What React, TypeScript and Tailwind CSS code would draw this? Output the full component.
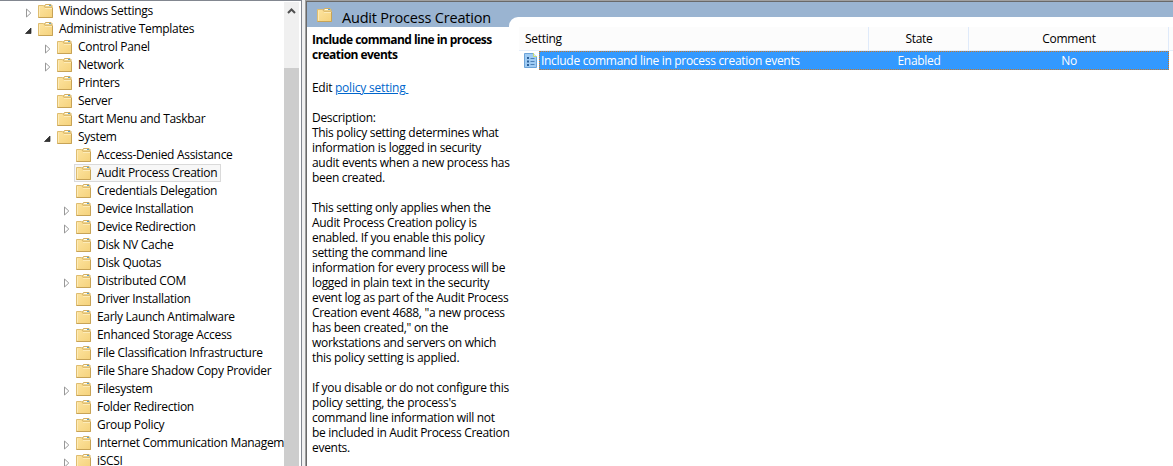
import React from "react";

type Item = { label: string; level: 0 | 1 | 2; state?: "open" | "closed"; selected?: boolean };

const items: Item[] = [
  { label: "Windows Settings", level: 0, state: "closed" },
  { label: "Administrative Templates", level: 0, state: "open" },
  { label: "Control Panel", level: 1, state: "closed" },
  { label: "Network", level: 1, state: "closed" },
  { label: "Printers", level: 1 },
  { label: "Server", level: 1 },
  { label: "Start Menu and Taskbar", level: 1 },
  { label: "System", level: 1, state: "open" },
  { label: "Access-Denied Assistance", level: 2 },
  { label: "Audit Process Creation", level: 2, selected: true },
  { label: "Credentials Delegation", level: 2 },
  { label: "Device Installation", level: 2, state: "closed" },
  { label: "Device Redirection", level: 2, state: "closed" },
  { label: "Disk NV Cache", level: 2 },
  { label: "Disk Quotas", level: 2 },
  { label: "Distributed COM", level: 2, state: "closed" },
  { label: "Driver Installation", level: 2 },
  { label: "Early Launch Antimalware", level: 2 },
  { label: "Enhanced Storage Access", level: 2 },
  { label: "File Classification Infrastructure", level: 2 },
  { label: "File Share Shadow Copy Provider", level: 2 },
  { label: "Filesystem", level: 2, state: "closed" },
  { label: "Folder Redirection", level: 2 },
  { label: "Group Policy", level: 2 },
  { label: "Internet Communication Management", level: 2, state: "closed" },
  { label: "iSCSI", level: 2, state: "closed" },
];

const indent = ["pl-[24px]", "pl-[43px]", "pl-[62px]"];

function Folder() {
  return (
    <svg width="15" height="14" viewBox="0 0 15 14" className="shrink-0">
      <defs>
        <linearGradient id="folder" x1="0" y1="0" x2="1" y2="1">
          <stop offset="0" stopColor="#fde4a0" />
          <stop offset="1" stopColor="#f5d27c" />
        </linearGradient>
      </defs>
      <path d="M6.500 4V1.500l1-1h5.500l1 1V4z" fill="#f0d48a" stroke="#d3ae62" />
      <path d="M8 1.500h3" stroke="#fffdf2" />
      <path d="M11 1.500h2" stroke="#5aa3cf" />
      <path d="M.5 1.500h5l1.500 2h7.500v10H.5z" fill="url(#folder)" stroke="#dfbd70" />
      <path d="M1.500 12.500v-10M7 4.500h7" fill="none" stroke="#fdebb8" />
      <path d="M.5 13.500h14V4" fill="none" stroke="#c7a356" />
    </svg>
  );
}

function Expander({ state }: { state?: "open" | "closed" }) {
  return (
    <svg width="8" height="10" viewBox="0 0 8 10" className="mt-[3px] shrink-0">
      {state === "closed" && <path d="M2.500 1v8l4.300-4z" fill="#fff" stroke="#989898" />}
      {state === "open" && <path d="M7 2v5.500H1.500z" fill="#333" stroke="#222" strokeWidth=".7" />}
    </svg>
  );
}

function TreeItem({ item }: { item: Item }) {
  return (
    <div className={`flex h-[18px] shrink-0 items-center ${indent[item.level]}`}>
      <Expander state={item.state} />
      <div
        className={`ml-[4px] flex h-[18px] items-center border pl-[1px] pr-[3px] ${
          item.selected ? "border-[#dadada] bg-[#f7f7f7]" : "border-transparent"
        }`}
      >
        <Folder />
        <span className="ml-[6px] whitespace-nowrap leading-[16px]">{item.label}</span>
      </div>
    </div>
  );
}

function PolicyIcon() {
  return (
    <svg width="13" height="15" viewBox="0 0 13 15" className="shrink-0">
      <path d="M.5.5h9l3 3v11H.5z" fill="#9fcbf3" stroke="#6ba3d8" />
      <path d="M9.500 0v3.500H13" fill="#cfe6f8" stroke="#c3da7a" />
      <path d="M3 5h2M3 8.500h2M3 12h2" stroke="#2a5f99" strokeWidth="2" />
      <path d="M6.500 5.500h4M6.500 8.500h4M6.500 11.500h4" stroke="#4b80b8" />
    </svg>
  );
}

const description = [
  "Description:",
  "This policy setting determines what",
  "information is logged in security",
  "audit events when a new process has",
  "been created.",
  "",
  "This setting only applies when the",
  "Audit Process Creation policy is",
  "enabled. If you enable this policy",
  "setting the command line",
  "information for every process will be",
  "logged in plain text in the security",
  "event log as part of the Audit Process",
  "Creation event 4688, \"a new process",
  "has been created,\" on the",
  "workstations and servers on which",
  "this policy setting is applied.",
  "",
  "If you disable or do not configure this",
  "policy setting, the process's",
  "command line information will not",
  "be included in Audit Process Creation",
  "events.",
];

export default function App() {
  return (
    <div className="flex h-[466px] w-[1173px] overflow-hidden bg-[#f0f0f0] font-['Open_Sans',sans-serif] text-[12px] tracking-[-0.3px] text-black">
      <aside className="flex w-[302px] shrink-0 border-r border-t border-[#828790] bg-white">
        <nav className="flex w-[284px] flex-col overflow-hidden pt-[1px]">
          {items.map((item) => (
            <TreeItem key={item.label} item={item} />
          ))}
        </nav>
        <div className="mt-[1px] flex w-[15px] flex-col bg-[#f0f0f0]">
          <div className="flex h-[66px] justify-center pt-[5px]">
            <svg width="9" height="8" viewBox="0 0 9 8">
              <path d="M1 6l3.500-3.500L8 6" fill="none" stroke="#505050" strokeWidth="2" />
            </svg>
          </div>
          <div className="grow bg-[#cdcdcd]" />
        </div>
      </aside>

      <main className="ml-[3px] flex grow flex-col border-l border-t border-[#a0a0a0]">
        <div className="flex grow flex-col border-l border-t border-[#696969] bg-white">
          <header className="flex h-[25px] shrink-0 bg-[#9ab4d1]">
            <div className="flex w-[202px] items-start pl-[10px] pt-[6px]">
              <Folder />
              <h1 className="ml-[10px] whitespace-nowrap text-[14.500px] leading-[20px] tracking-[-0.2px]">
                Audit Process Creation
              </h1>
            </div>
            <div className="mt-[15px] grow rounded-tl-[9px] bg-white" />
          </header>
          <div className="flex grow">
            <section className="w-[212px] shrink-0 whitespace-pre pl-[5px] pt-[5px] leading-[15px]">
              <h2 className="font-bold tracking-[-0.530px]">
                Include command line in process
                <br />
                creation events
              </h2>
              <p className="mt-[18px]">
                Edit <a className="tracking-[-0.2px] text-[#0066cc] underline">{"policy setting "}</a>
              </p>
              <div className="mt-[15px]">
                {description.map((line, i) => (
                  <p key={i} className="h-[15px]">
                    {line}
                  </p>
                ))}
              </div>
            </section>
            <section className="flex grow flex-col">
              <div className="flex h-[24px] border-b border-[#e5eefa] bg-[#fcfcfc] leading-[23px]">
                <div className="w-[350px] border-r border-[#dfeafa] pl-[6px]">Setting</div>
                <div className="w-[100px] border-r border-[#dfeafa] pl-[1px] text-center">State</div>
                <div className="w-[200px] border-r border-[#dfeafa] pl-[1px] text-center">Comment</div>
              </div>
              <div className="flex h-[19px] items-center pl-[5px]">
                <PolicyIcon />
                <div className="ml-[2px] flex h-[19px] w-[630px] border border-dotted border-[#c87828] bg-[#3399ff] leading-[18px] text-white">
                  <div className="w-[329px] pl-[1px]">Include command line in process creation events</div>
                  <div className="w-[100px] text-center">Enabled</div>
                  <div className="w-[199px] pl-[1px] text-center">No</div>
                </div>
              </div>
            </section>
          </div>
        </div>
      </main>
    </div>
  );
}
